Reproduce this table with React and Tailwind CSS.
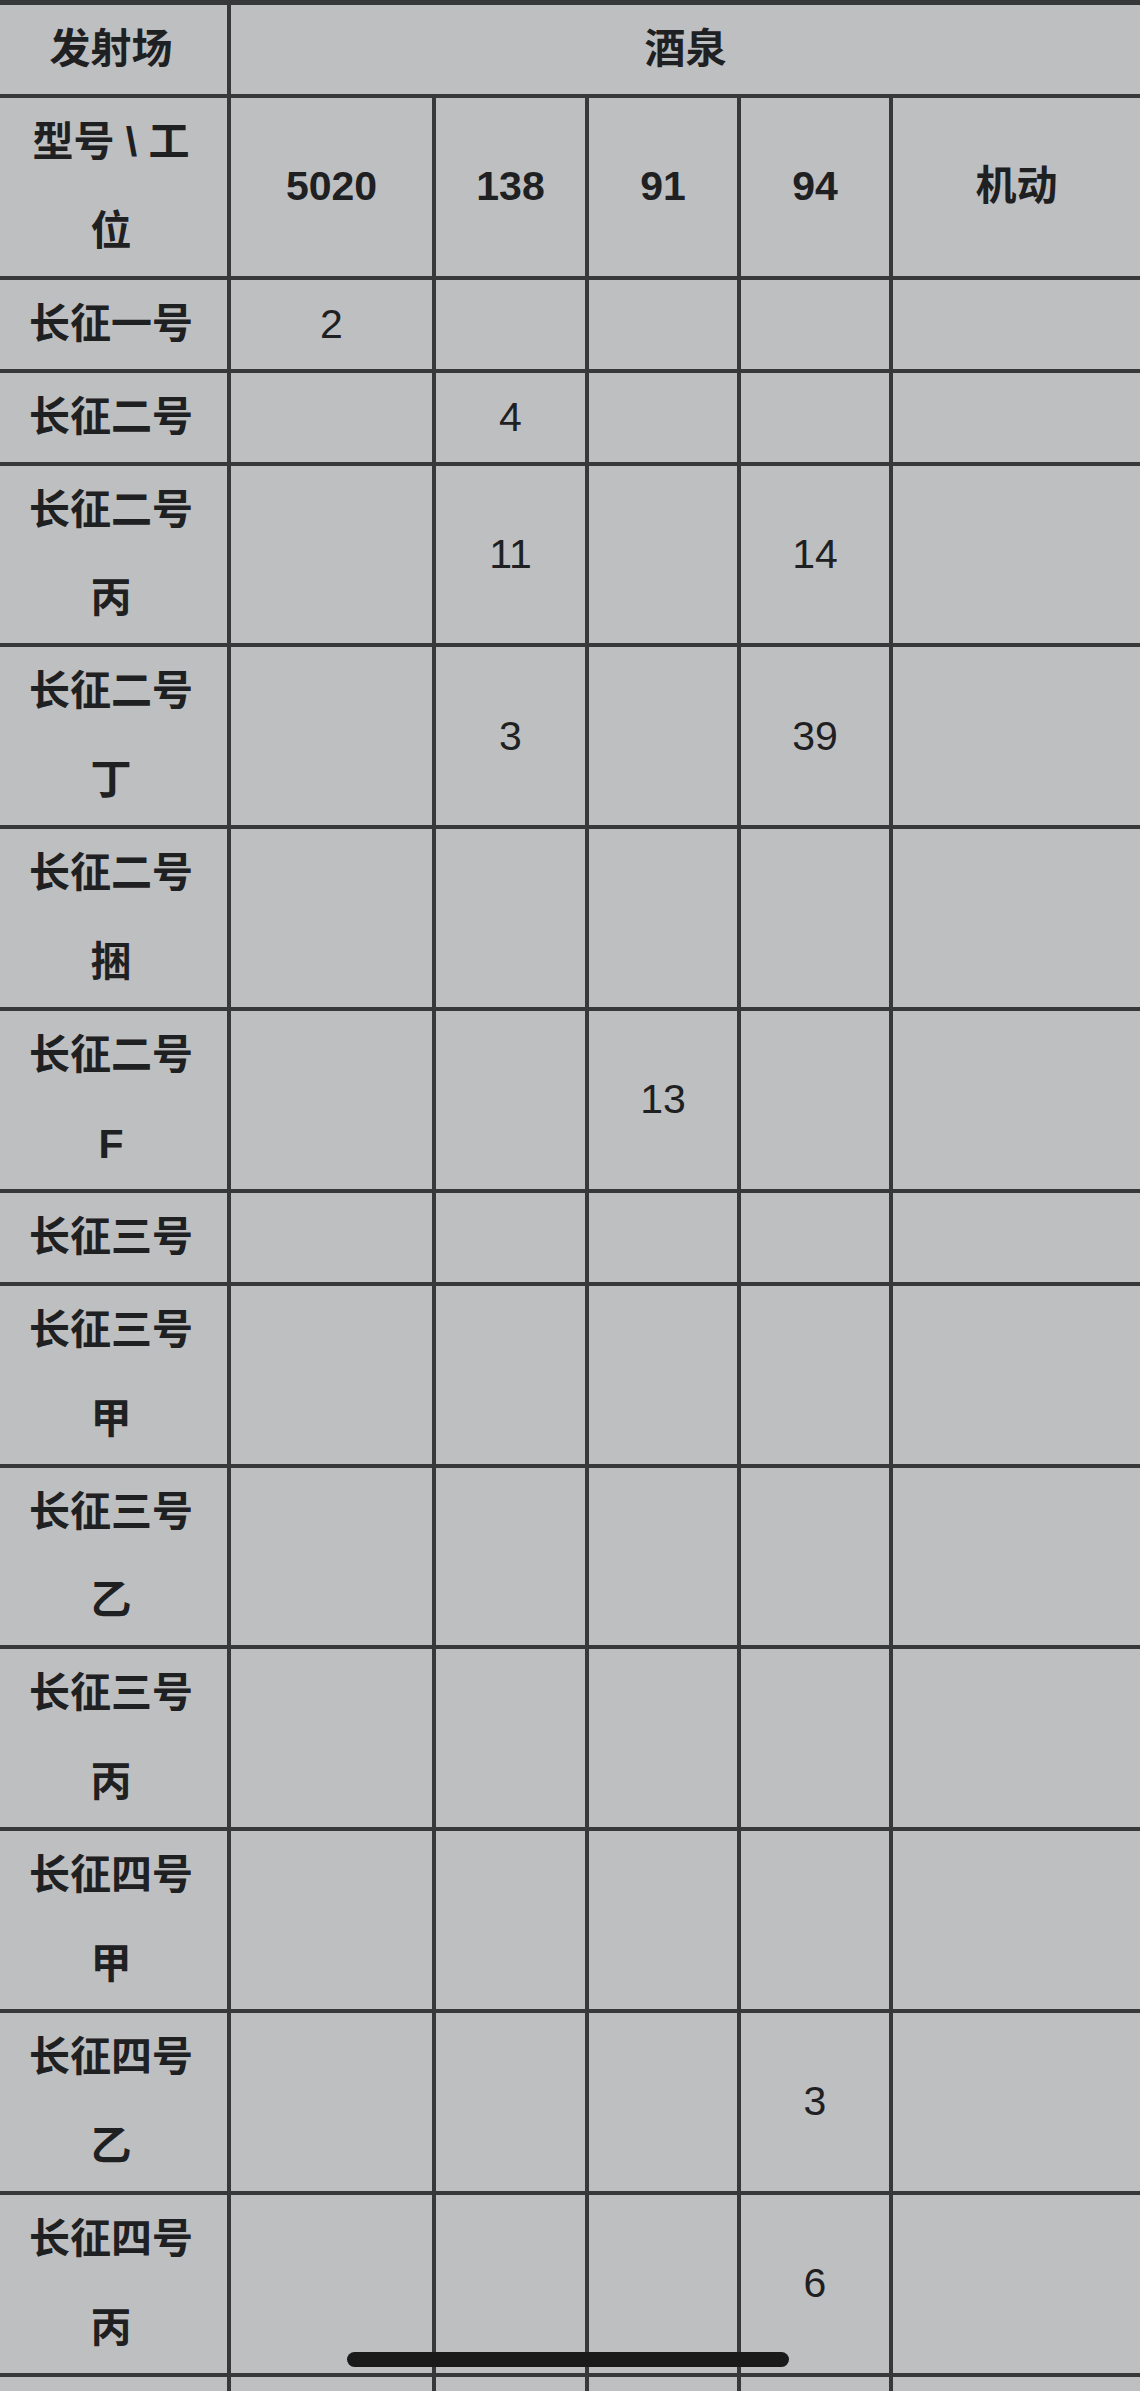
import React from "react";

const rows = [
  { name: "长征一号", cells: ["2", "", "", "", ""] },
  { name: "长征二号", cells: ["", "4", "", "", ""] },
  { name: "长征二号丙", cells: ["", "11", "", "14", ""] },
  { name: "长征二号丁", cells: ["", "3", "", "39", ""] },
  { name: "长征二号捆", cells: ["", "", "", "", ""] },
  { name: "长征二号F", cells: ["", "", "13", "", ""] },
  { name: "长征三号", cells: ["", "", "", "", ""] },
  { name: "长征三号甲", cells: ["", "", "", "", ""] },
  { name: "长征三号乙", cells: ["", "", "", "", ""] },
  { name: "长征三号丙", cells: ["", "", "", "", ""] },
  { name: "长征四号甲", cells: ["", "", "", "", ""] },
  { name: "长征四号乙", cells: ["", "", "", "3", ""] },
  { name: "长征四号丙", cells: ["", "", "", "6", ""] },
];

const cell =
  "border-[4px] border-[#37383a] px-[24px] py-0 text-center align-middle leading-[88.9px]";

export default function App() {
  return (
    <div
      className="relative h-[2391px] w-[1140px] overflow-hidden bg-[#bdbfc1] text-[#1f2022] text-[41px]"
      style={{ fontFamily: '"Liberation Sans", "Noto Sans CJK SC", sans-serif' }}
    >
      <table className="ml-[-9px] w-[1149px] table-fixed border-collapse">
        <colgroup>
          <col className="w-[236px]" />
          <col className="w-[205px]" />
          <col className="w-[153px]" />
          <col className="w-[152px]" />
          <col className="w-[152px]" />
          <col className="w-[251px]" />
        </colgroup>
        <thead>
          <tr>
            <th className={`${cell} border-t-[5px] font-bold`}>发射场</th>
            <th colSpan={5} className={`${cell} border-t-[5px] font-bold`}>
              酒泉
            </th>
          </tr>
          <tr>
            <th className={`${cell} font-bold`}>型号 \ 工位</th>
            <th className={`${cell} font-bold`}>5020</th>
            <th className={`${cell} font-bold`}>138</th>
            <th className={`${cell} font-bold`}>91</th>
            <th className={`${cell} font-bold`}>94</th>
            <th className={`${cell} font-bold`}>机动</th>
          </tr>
        </thead>
        <tbody>
          {rows.map((r) => (
            <tr key={r.name}>
              <th className={`${cell} font-bold`}>{r.name}</th>
              {r.cells.map((c, i) => (
                <td key={i} className={`${cell} font-normal`}>
                  {c}
                </td>
              ))}
            </tr>
          ))}
          <tr>
            <th className={`${cell} font-bold`}>&nbsp;</th>
            {[0, 1, 2, 3, 4].map((i) => (
              <td key={i} className={cell}>
                &nbsp;
              </td>
            ))}
          </tr>
        </tbody>
      </table>

      {/* home indicator */}
      <div className="absolute left-[347px] top-[2352px] h-[15px] w-[442px] rounded-full bg-[#1a1a1b]" />
    </div>
  );
}
